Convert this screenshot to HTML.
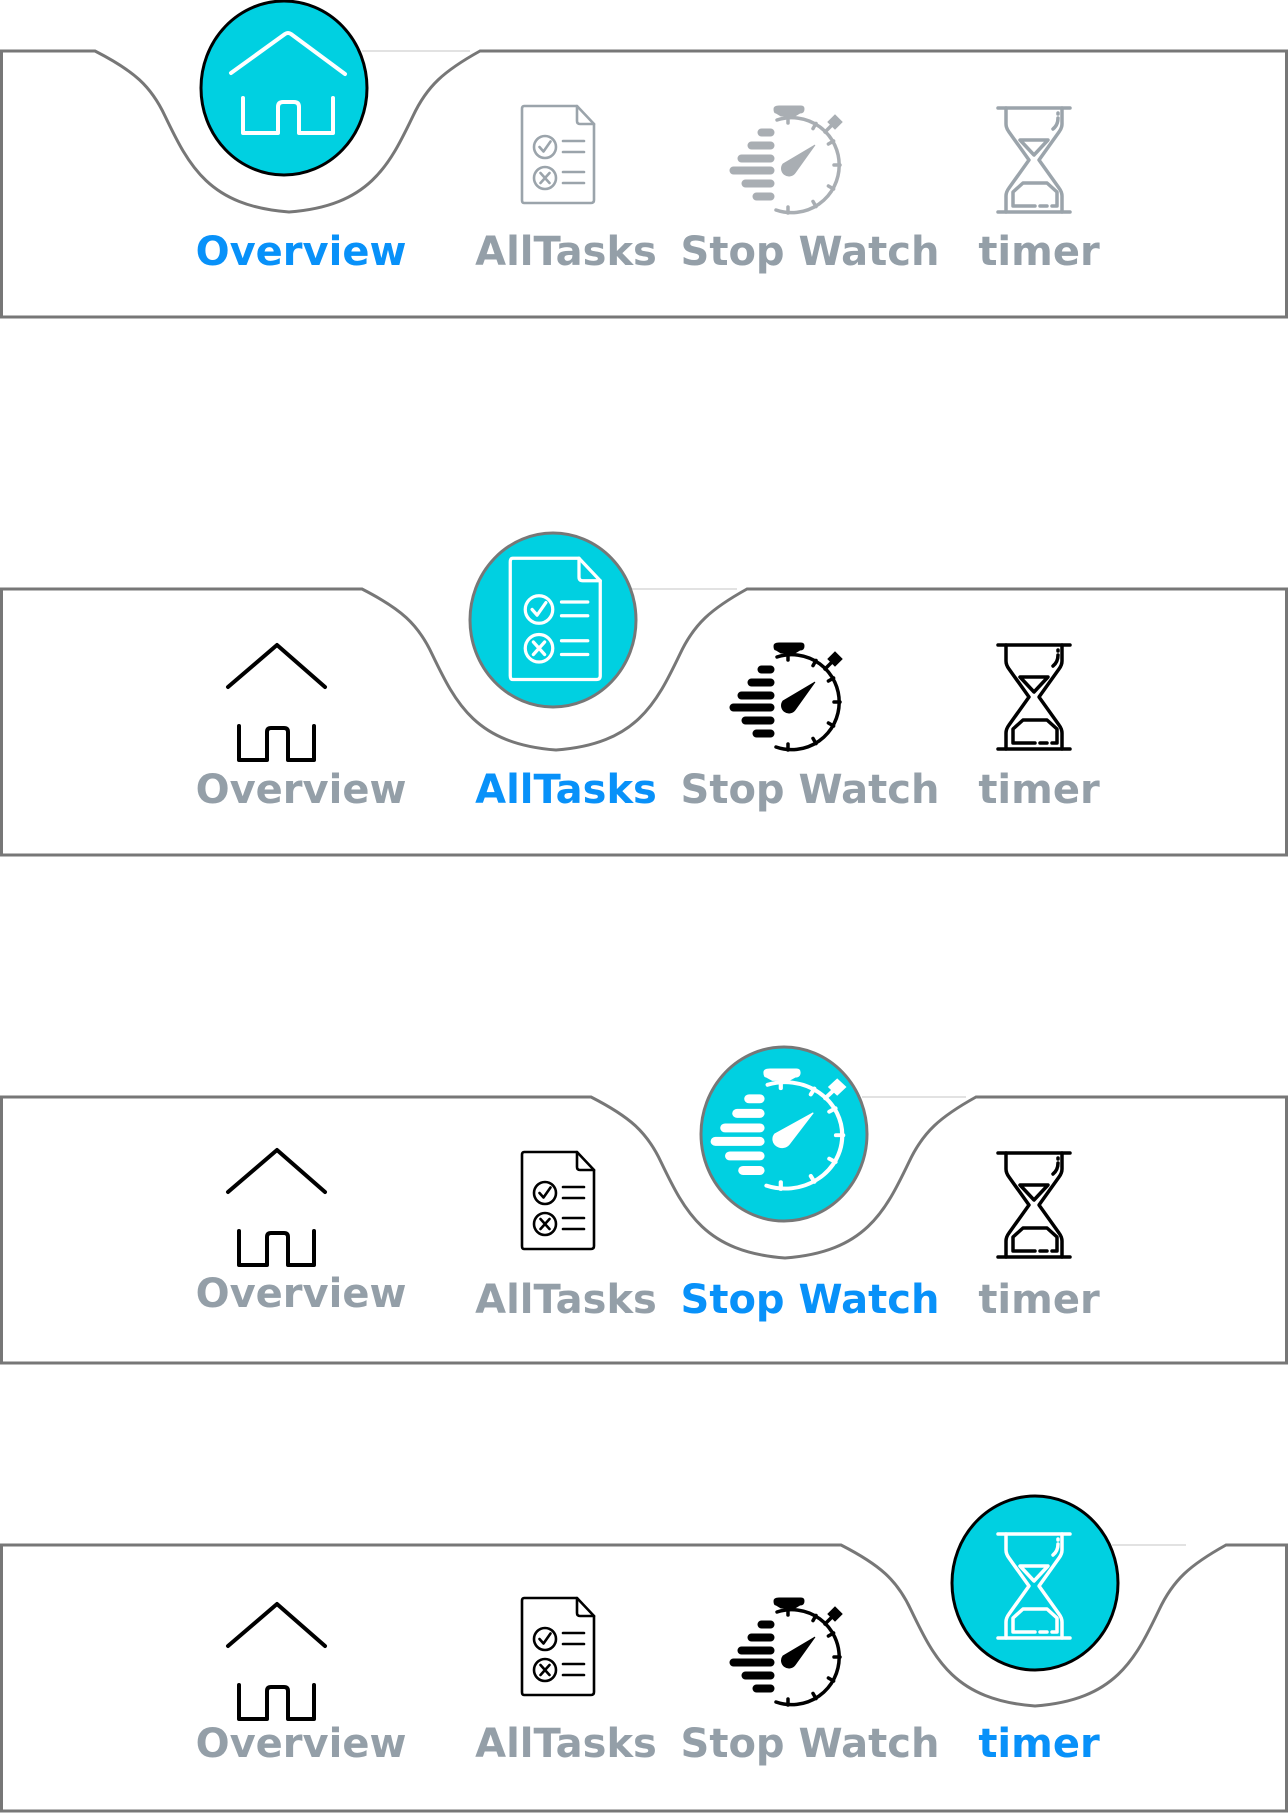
<!DOCTYPE html>
<html><head><meta charset="utf-8"><style>
html,body{margin:0;padding:0;background:#fff;}
svg{display:block;}
text{font-family:"DejaVu Sans","Liberation Sans",sans-serif;font-weight:bold;font-size:40px;text-anchor:middle;}
</style></head><body>
<svg width="1288" height="1813" viewBox="0 0 1288 1813" xmlns="http://www.w3.org/2000/svg">
<defs>
<g id="doc" fill="none" stroke-width="2.6" stroke-linecap="round" stroke-linejoin="round">
  <path d="M3,1 H56 L73,19 V95 Q73,98 70,98 H3 Q1,98 1,95 V4 Q1,1 3,1 Z"/>
  <path d="M56,1 V16 Q56,19 59,19 H73"/>
  <circle cx="24" cy="42" r="11"/><path d="M18.5,42 L22.5,46.5 L29.5,36.5"/>
  <circle cx="24" cy="73" r="11"/><path d="M19.5,68 L28.5,78 M28.5,68 L19.5,78"/>
  <path d="M42,36 H63 M42,47 H63 M42,67 H63 M42,78 H63"/>
</g>
<g id="sw">
  <g fill="none" stroke-width="3.5" stroke-linecap="round">
    <path d="M48,15 A47.5,47.5 0 1 1 47,105"/>
    <path d="M59,8 V18"/>
    <path d="M96,27 L103,20"/>
    <path d="M87,18.4 L84,23.6 M104.6,36 L99.4,39 M111,60 L105,60 M104.6,84 L99.4,81 M87,101.6 L84,96.4 M59,108 L59,102"/>
  </g>
  <path d="M50,1 H72 Q75,1 75,4 Q75,8 71,8 L66,11 H52 L47,8 Q45,8 45,4 Q45,1 50,1 Z"/>
  <rect x="101" y="12" width="10" height="10" transform="rotate(45 106 17)"/>
  <rect x="29" y="24" width="16" height="7" rx="3.5"/>
  <rect x="19" y="37" width="26" height="7" rx="3.5"/>
  <rect x="9" y="50" width="36" height="7" rx="3.5"/>
  <rect x="1" y="62" width="44" height="7" rx="3.5"/>
  <rect x="13" y="75" width="32" height="7" rx="3.5"/>
  <rect x="24" y="88" width="21" height="7" rx="3.5"/>
  <path d="M86,40 L66,68 A7.5,7.5 0 1 1 54,59 Z"/>
</g>
<g id="hg" fill="none" stroke-width="3.5" stroke-linecap="round" stroke-linejoin="round">
  <path d="M0,2 H72 M0,106 H72"/>
  <path d="M8,2 V18 Q8,22 11,26 L31,54 L11,82 Q8,86 8,90 V106"/>
  <path d="M64,2 V18 Q64,22 61,26 L41,54 L61,82 Q64,86 64,90 V106"/>
  <path d="M22,34 H50 L36,49 Z"/>
  <path d="M37,100 H15 V86 L25,77 H49 L59,86 V100 H54 M49,100 H42"/>
  <path d="M60,7 V8 M60,12 Q60,19 55,23"/>
</g>
<g id="home" fill="none" stroke-width="4" stroke-linecap="round" stroke-linejoin="round">
  <path d="M0,44 L49,2 L97,44"/>
  <path d="M11,83 V117 H39 V89 Q39,85 43,85 H56 Q60,85 60,89 V117 H86 V83"/>
</g>
</defs>

<!-- Panel 1 -->
<g transform="translate(0,51)">
  <path d="M1.5,0 H95 C134,20 151,35 165,65 C189,115 209,155 289,161 C369,155 389,115 413,65 C427,35 444,20 480,0 H1286.5 V266 H1.5 Z" fill="#fff" stroke="#777" stroke-width="3"/>
  <path d="M362,0 H470" stroke="#e2e2e2" stroke-width="2"/>
  <ellipse cx="284" cy="37" rx="83" ry="87" fill="#00d0e1" stroke="#000" stroke-width="3"/>
  <g stroke="#fff" fill="none" stroke-width="4" stroke-linecap="round" stroke-linejoin="round">
    <path d="M231,22 L285,-17 Q288,-19 291,-17 L345,23"/>
    <path d="M243,47 V82 H278 V56 Q278,51 283,51 H294 Q299,51 299,56 V82 H333 V47"/>
  </g>
  <use href="#doc" transform="translate(521,54)" stroke="#9ba4ab"/>
  <use href="#sw" transform="translate(729,54)" fill="#a9aeb3" stroke="#a9aeb3"/>
  <use href="#hg" transform="translate(998,55)" stroke="#9ba4ab"/>
  <text x="301" y="214" fill="#0891f9">Overview</text>
  <text x="566" y="214" fill="#949fa8">AllTasks</text>
  <text x="810" y="214" fill="#949fa8">Stop Watch</text>
  <text x="1039" y="214" fill="#949fa8">timer</text>
</g>

<!-- Panel 2 -->
<g transform="translate(0,589)">
  <path d="M1.5,0 H362 C401,20 418,35 432,65 C456,115 476,155 556,161 C636,155 656,115 680,65 C694,35 711,20 747,0 H1286.5 V266 H1.5 Z" fill="#fff" stroke="#777" stroke-width="3"/>
  <path d="M630,0 H737" stroke="#e2e2e2" stroke-width="2"/>
  <ellipse cx="553" cy="31" rx="83" ry="87" fill="#00d0e1" stroke="#777" stroke-width="3"/>
  <use href="#doc" transform="translate(509,-32) scale(1.25)" stroke="#fff"/>
  <use href="#home" transform="translate(228,54)" stroke="#000"/>
  <use href="#sw" transform="translate(729,53)" fill="#000" stroke="#000"/>
  <use href="#hg" transform="translate(998,54)" stroke="#000"/>
  <text x="301" y="214" fill="#949fa8">Overview</text>
  <text x="566" y="214" fill="#0891f9">AllTasks</text>
  <text x="810" y="214" fill="#949fa8">Stop Watch</text>
  <text x="1039" y="214" fill="#949fa8">timer</text>
</g>

<!-- Panel 3 -->
<g transform="translate(0,1097)">
  <path d="M1.5,0 H591 C630,20 647,35 661,65 C685,115 705,155 785,161 C865,155 885,115 909,65 C923,35 940,20 976,0 H1286.5 V266 H1.5 Z" fill="#fff" stroke="#777" stroke-width="3"/>
  <path d="M862,0 H966" stroke="#e2e2e2" stroke-width="2"/>
  <ellipse cx="784" cy="37" rx="83" ry="87" fill="#00d0e1" stroke="#777" stroke-width="3"/>
  <use href="#sw" transform="translate(710,-29) scale(1.2,1.12)" fill="#fff" stroke="#fff"/>
  <use href="#home" transform="translate(228,51)" stroke="#000"/>
  <use href="#doc" transform="translate(521,54)" stroke="#000"/>
  <use href="#hg" transform="translate(998,54)" stroke="#000"/>
  <text x="301" y="210" fill="#949fa8">Overview</text>
  <text x="566" y="216" fill="#949fa8">AllTasks</text>
  <text x="810" y="216" fill="#0891f9">Stop Watch</text>
  <text x="1039" y="216" fill="#949fa8">timer</text>
</g>

<!-- Panel 4 -->
<g transform="translate(0,1545)">
  <path d="M1.5,0 H841 C880,20 897,35 911,65 C935,115 955,155 1035,161 C1115,155 1135,115 1159,65 C1173,35 1190,20 1226,0 H1286.5 V266 H1.5 Z" fill="#fff" stroke="#777" stroke-width="3"/>
  <path d="M1112,0 H1186" stroke="#e2e2e2" stroke-width="2"/>
  <ellipse cx="1035" cy="38" rx="83" ry="87" fill="#00d0e1" stroke="#000" stroke-width="3"/>
  <use href="#hg" transform="translate(998,-13)" stroke="#fff"/>
  <use href="#home" transform="translate(228,57)" stroke="#000"/>
  <use href="#doc" transform="translate(521,52)" stroke="#000"/>
  <use href="#sw" transform="translate(729,52)" fill="#000" stroke="#000"/>
  <text x="301" y="212" fill="#949fa8">Overview</text>
  <text x="566" y="212" fill="#949fa8">AllTasks</text>
  <text x="810" y="212" fill="#949fa8">Stop Watch</text>
  <text x="1039" y="212" fill="#0891f9">timer</text>
</g>
</svg>
</body></html>
